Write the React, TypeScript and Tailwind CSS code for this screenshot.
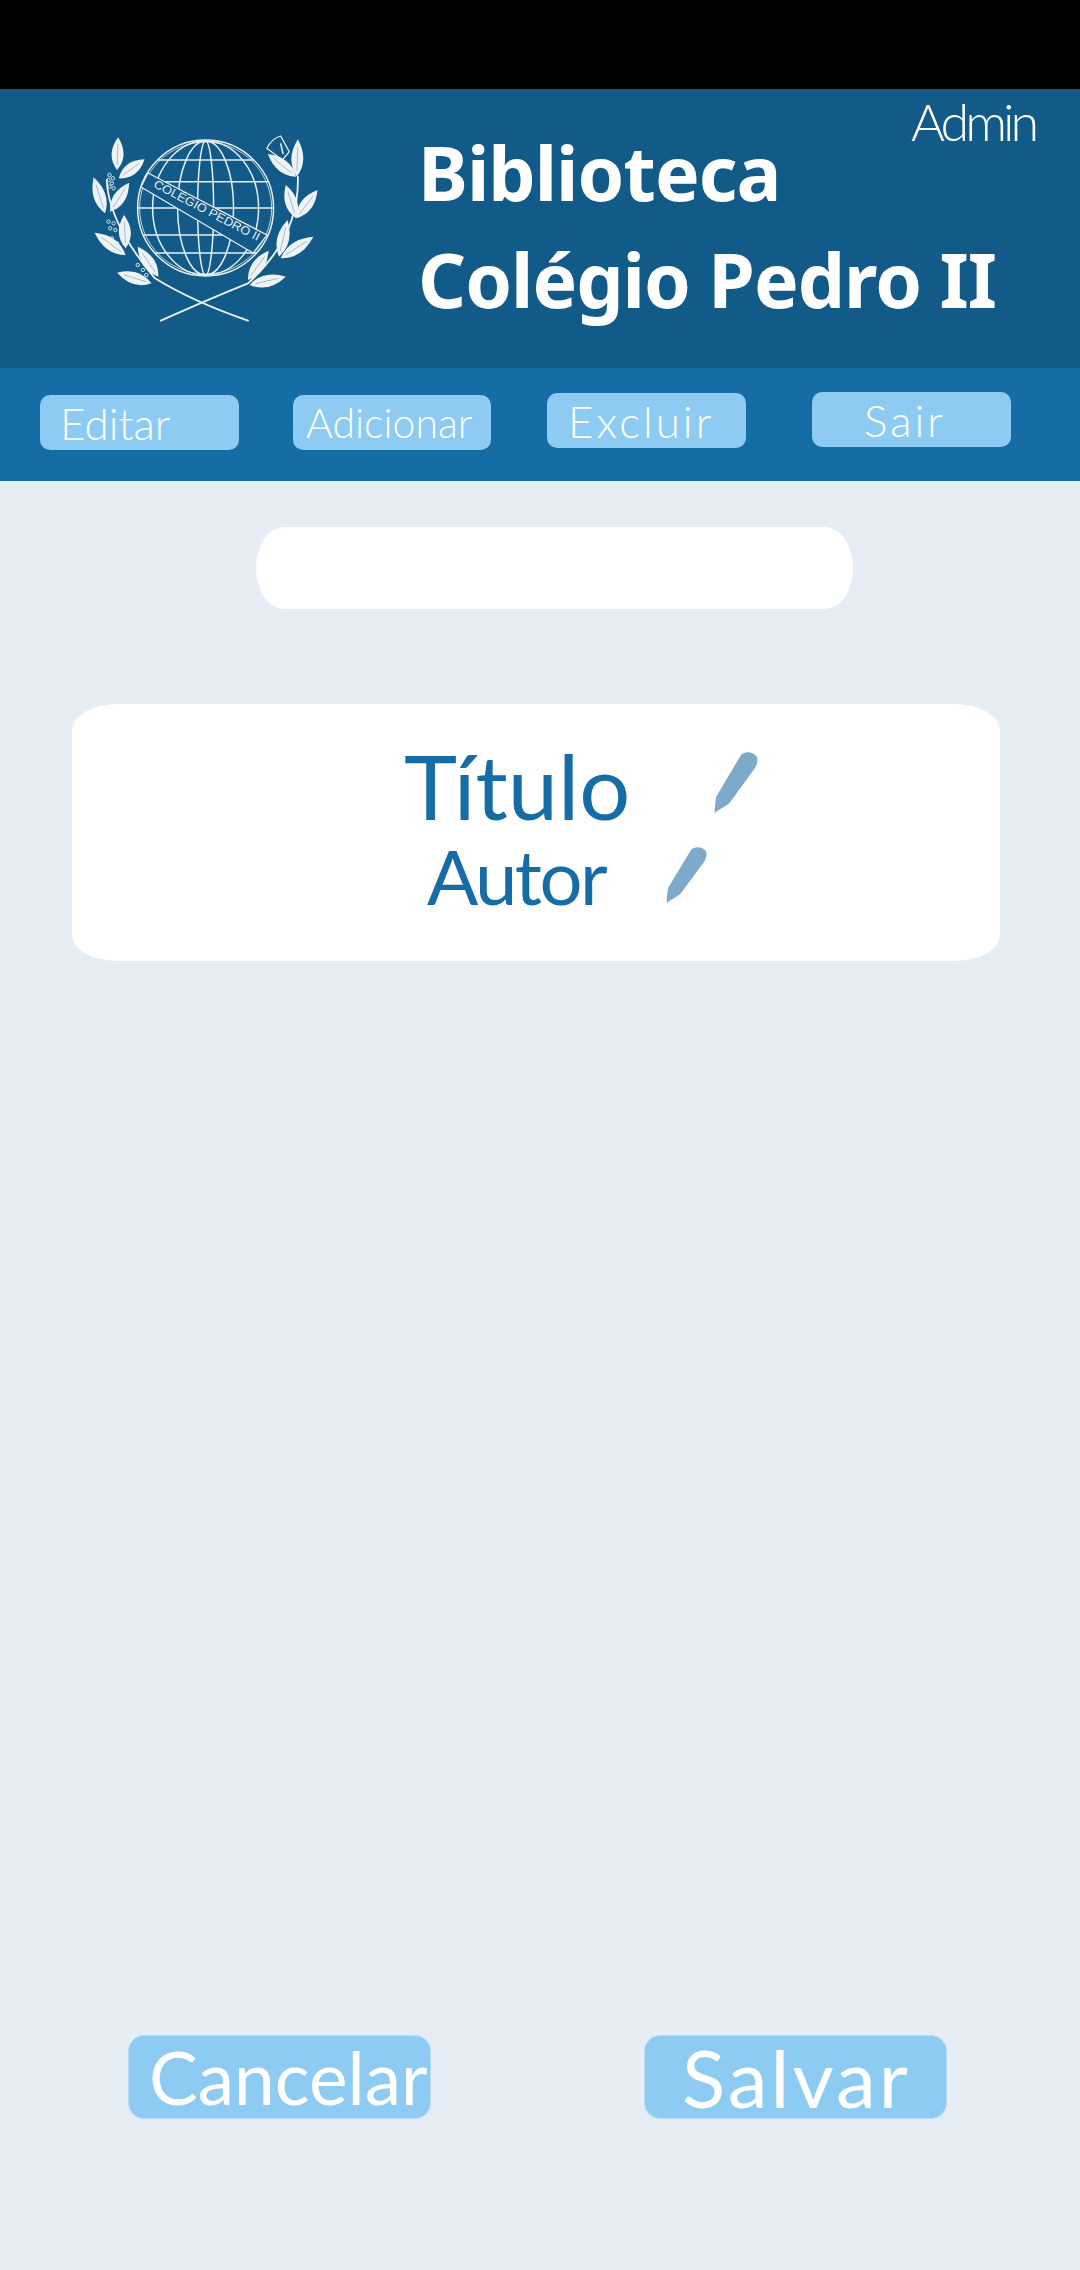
const px = (x: number) => x / 2.904;
const py = (y: number) => 80 + y / 3;

function Leaf({ t, b, w = 12 }: { t: [number, number]; b: [number, number]; w?: number }) {
  const x1 = px(t[0]), y1 = py(t[1]), x2 = px(b[0]), y2 = py(b[1]);
  const dx = x2 - x1, dy = y2 - y1;
  const len = Math.hypot(dx, dy);
  const nx = -dy / len, ny = dx / len;
  const cx = x1 + dx * 0.55, cy = y1 + dy * 0.55;
  const d = `M${x1} ${y1} Q${cx + nx * w} ${cy + ny * w} ${x2} ${y2} Q${cx - nx * w} ${cy - ny * w} ${x1} ${y1}Z`;
  return (
    <g>
      <path d={d} fill="#eef3f7" />
      <path d={`M${x1 + dx * 0.2} ${y1 + dy * 0.2} L${x2 - dx * 0.15} ${y2 - dy * 0.15}`} stroke="#125a87" strokeWidth="0.7" opacity="0.5" />
    </g>
  );
}

const leaves: [[number, number], [number, number]][] = [
  [[343, 172], [340, 270]],
  [[420, 238], [345, 295]],
  [[272, 292], [305, 400]],
  [[375, 308], [320, 395]],
  [[360, 405], [365, 505]],
  [[275, 458], [365, 525]],
  [[400, 500], [460, 590]],
  [[340, 578], [440, 610]],
  [[865, 178], [862, 290]],
  [[778, 222], [860, 290]],
  [[830, 315], [860, 415]],
  [[922, 330], [860, 415]],
  [[835, 420], [810, 530]],
  [[910, 470], [815, 535]],
  [[780, 512], [720, 600]],
  [[830, 590], [725, 615]],
];

const meridians = [8, 28, 53];
const parallels = [
  [160, 48],
  [181.7, 63],
  [208, 68],
  [235, 62],
  [253, 51],
];
const berries = [
  [318, 285], [328, 295], [315, 300], [325, 310], [318, 320], [330, 325], [315, 425], [330, 430], [320, 445], [335, 450], [325, 475], [340, 490], [400, 555], [415, 570], [425, 585],
];

function Logo() {
  return (
    <svg width="240" height="200" viewBox="85 130 240 200" className="shrink-0" fill="none">
      <g stroke="#e8eff5" strokeWidth="1.5">
        <circle cx="205.6" cy="208" r="68" />
        <circle cx="205.6" cy="208" r="66" strokeWidth="0.8" />
        {meridians.map((r) => (
          <ellipse key={r} cx="205.6" cy="208" rx={r} ry="67" />
        ))}
        {parallels.map(([y, h]) => (
          <path key={y} d={`M${205.6 - h} ${y}H${205.6 + h}`} />
        ))}
      </g>
      <path d="M148 173L267 235L253 253L141 187Z" fill="#125a87" stroke="#e8eff5" strokeWidth="1.2" />
      <text
        x="0"
        y="0"
        transform="translate(205 214) rotate(27.5)"
        textAnchor="middle"
        fontSize="12"
        fill="#e8eff5"
        textLength="118"
        lengthAdjust="spacingAndGlyphs"
        className="font-['Liberation_Sans']"
      >
        COLÉGIO PEDRO II
      </text>
      <g stroke="#eef3f7" strokeWidth="1.8" strokeLinecap="round">
        <path d={`M${px(310)} ${py(300)}Q${px(315)} ${py(430)} ${px(450)} ${py(595)}Q${px(560)} ${py(665)} ${px(720)} ${py(722)}`} />
        <path d={`M${px(865)} ${py(290)}Q${px(870)} ${py(470)} ${px(720)} ${py(610)}Q${px(600)} ${py(660)} ${px(467)} ${py(722)}`} />
      </g>
      {leaves.map(([t, b], i) => (
        <Leaf key={i} t={t} b={b} />
      ))}
      {berries.map(([x, y], i) => (
        <circle key={i} cx={px(x)} cy={py(y)} r="1.7" stroke="#eef3f7" strokeWidth="0.9" />
      ))}
      <path d={`M${px(775)} ${py(205)}Q${px(790)} ${py(175)} ${px(815)} ${py(168)}L${px(840)} ${py(215)}L${px(820)} ${py(240)}Z`} stroke="#eef3f7" strokeWidth="1.2" />
      <path d={`M${px(815)} ${py(190)}L${px(822)} ${py(222)}`} stroke="#eef3f7" strokeWidth="1.5" />
    </svg>
  );
}

function Pencil({ className, w, h }: { className: string; w: number; h: number }) {
  return (
    <svg width={w} height={h} viewBox="0 0 44 61" className={`shrink-0 ${className}`} preserveAspectRatio="none">
      <path d="M27 3C31 -1 39 -1 43 5C44 9 43 12 41 16L17 49C14 54 6 56 1 61C0 55 2 50 2 45Z" fill="#7eaac9" />
    </svg>
  );
}

const hand = "font-['Lato'] text-white leading-none";

export default function App() {
  return (
    <div className="flex h-[2270px] w-[1080px] flex-col overflow-hidden bg-[#e6edf4] font-['Noto_Sans',sans-serif]">
      <div className="h-[89px] shrink-0 bg-black" />

      <header className="relative flex h-[279px] shrink-0 bg-[#125a87] pl-[85px] pt-[41px]">
        <Logo />
        <h1 className="ml-[93px] mt-[-11px] text-[75px] font-bold leading-[107px] tracking-[-1px] text-white">
          Biblioteca
          <br />
          Colégio Pedro II
        </h1>
        <span className={`absolute left-[911px] top-[6px] text-[52px] font-light tracking-[-4px] ${hand}`}>Admin</span>
      </header>

      <nav className="flex h-[113px] shrink-0 items-start bg-[#166ca4] pl-[40px]">
        <button className={`mt-[27px] flex h-[55px] w-[199px] items-center rounded-[10px] bg-[#8ecbf2] pl-[20px] text-[44px] font-light ${hand}`}>Editar</button>
        <button className={`ml-[54px] mt-[27px] flex h-[55px] w-[198px] items-center rounded-[10px] bg-[#8ecbf2] pl-[13px] text-[41px] font-light ${hand}`}>Adicionar</button>
        <button className={`ml-[56px] mt-[25px] flex h-[55px] w-[199px] items-center rounded-[10px] bg-[#8ecbf2] pl-[21px] text-[44px] font-light tracking-[3px] ${hand}`}>Excluir</button>
        <button className={`ml-[66px] mt-[24px] flex h-[55px] w-[199px] items-center rounded-[10px] bg-[#8ecbf2] pl-[52px] text-[44px] font-light tracking-[3px] ${hand}`}>Sair</button>
      </nav>

      <div className="ml-[256px] mt-[46px] h-[82px] w-[597px] shrink-0 rounded-[28px/41px] bg-white" />

      <section className="ml-[72px] mt-[95px] h-[257px] w-[928px] shrink-0 rounded-[46px/26px] bg-white">
        <div className="flex items-start pl-[332px] pt-[33px]">
          <span className="w-[310px] font-['Lato'] text-[90px] font-normal leading-[96px] text-[#166ca4]">Título</span>
          <Pencil className="mt-[15px]" w={44} h={61} />
        </div>
        <div className="flex items-start pl-[355px]">
          <span className="w-[239px] font-['Lato'] text-[76px] font-normal leading-[86px] tracking-[-2.5px] text-[#166ca4]">Autor</span>
          <Pencil className="mt-[14px]" w={41} h={56} />
        </div>
      </section>

      <div className="mt-[1074px] flex shrink-0 pl-[128px]">
        <button className={`flex h-[84px] w-[303px] items-center rounded-[16px] border border-[#b5dcf5] bg-[#8ecbf2] pl-[20px] text-[73px] font-normal ${hand}`}>Cancelar</button>
        <button className={`ml-[213px] flex h-[84px] w-[303px] items-center rounded-[16px] border border-[#b5dcf5] bg-[#8ecbf2] pl-[37px] text-[80px] font-normal tracking-[3px] ${hand}`}>Salvar</button>
      </div>
    </div>
  );
}
